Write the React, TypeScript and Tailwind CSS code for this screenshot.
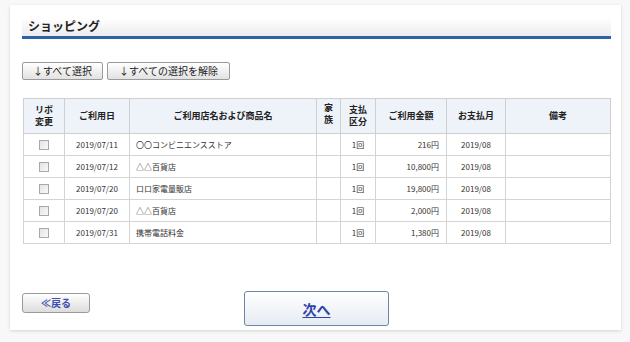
import React from "react";

const rows = [
  { date: "2019/07/11", name: "〇〇コンビニエンスストア", amt: "216円" },
  { date: "2019/07/12", name: "△△百貨店", amt: "10,800円" },
  { date: "2019/07/20", name: "ロロ家電量販店", amt: "19,800円" },
  { date: "2019/07/20", name: "△△百貨店", amt: "2,000円" },
  { date: "2019/07/31", name: "携帯電話料金", amt: "1,380円" },
];

const th = "border border-[#cfcfcf] bg-[#eef2f9] font-bold text-[#222] text-center align-middle leading-[12px] text-[9px]";
const td = "border border-[#d4d4d4] h-[22px] text-[8px] text-[#333] align-middle";

export default function App() {
  return (
    <div
      className="w-[630px] h-[342px] bg-[#f8f8f8] pt-[5px] pl-[10px]"
      style={{ fontFamily: '"Noto Sans CJK JP", "Noto Sans", sans-serif' }}
    >
      <div className="w-[611px] h-[325px] bg-white shadow-[0_1px_3px_rgba(0,0,0,0.15)] pl-[12px] pr-[10px] pt-[13px] flex flex-col">
        <div className="bg-gradient-to-b from-white to-[#ececec] border-b-[3px] border-[#2a63a8] h-[21px] pl-[6px] flex items-start">
          <span className="text-[12px] font-bold text-[#222] leading-[12px] mt-[2px]">ショッピング</span>
        </div>
        <div className="flex gap-[4px] mt-[23px]">
          <button className="h-[18px] px-[4px] border border-[#9a9a9a] rounded-[2px] bg-gradient-to-b from-white to-[#e2e2e2] text-[10px] leading-[10px] text-[#222] w-[81px]">
            ↓すべて選択
          </button>
          <button className="h-[18px] px-[4px] border border-[#9a9a9a] rounded-[2px] bg-gradient-to-b from-white to-[#e2e2e2] text-[10px] leading-[10px] text-[#222] w-[123px]">
            ↓すべての選択を解除
          </button>
        </div>
        <table className="mt-[18px] ml-[1px] border-collapse w-[588px] table-fixed">
          <colgroup>
            <col className="w-[41px]" />
            <col className="w-[65px]" />
            <col className="w-[187px]" />
            <col className="w-[24px]" />
            <col className="w-[35px]" />
            <col className="w-[71px]" />
            <col className="w-[59px]" />
            <col />
          </colgroup>
          <thead>
            <tr className="h-[35px]">
              <th className={th}>リボ<br />変更</th>
              <th className={th}>ご利用日</th>
              <th className={th}>ご利用店名および商品名</th>
              <th className={th + " align-top pt-[3px]"}>家<br />族</th>
              <th className={th}>支払<br />区分</th>
              <th className={th}>ご利用金額</th>
              <th className={th}>お支払月</th>
              <th className={th}>備考</th>
            </tr>
          </thead>
          <tbody>
            {rows.map((r, i) => (
              <tr key={i}>
                <td className={td + " text-center"}>
                  <span className="inline-block w-[10px] h-[10px] border border-[#a8a8a8] bg-gradient-to-br from-[#e4e4e4] to-[#f8f8f8] align-middle" />
                </td>
                <td className={td + " text-center"}>{r.date}</td>
                <td className={td + " pl-[6px]"}>{r.name}</td>
                <td className={td}></td>
                <td className={td + " text-center"}>1回</td>
                <td className={td + " text-right pr-[7px]"}>{r.amt}</td>
                <td className={td + " text-center"}>2019/08</td>
                <td className={td}></td>
              </tr>
            ))}
          </tbody>
        </table>
        <div className="flex items-start mt-[47px]">
          <button className="mt-[2px] w-[68px] h-[20px] border border-[#9a9a9a] rounded-[3px] bg-gradient-to-b from-white to-[#dcdcdc] text-[10px] font-bold text-[#3b4fb0] leading-[10px]">
            ≪戻る
          </button>
          <button className="ml-[154px] w-[145px] h-[35px] border border-[#6d86a6] rounded-[3px] bg-gradient-to-b from-white to-[#e6ebf3] text-[14px] font-bold text-[#2d44a8] underline underline-offset-2 leading-[14px]">
            次へ
          </button>
        </div>
      </div>
    </div>
  );
}
